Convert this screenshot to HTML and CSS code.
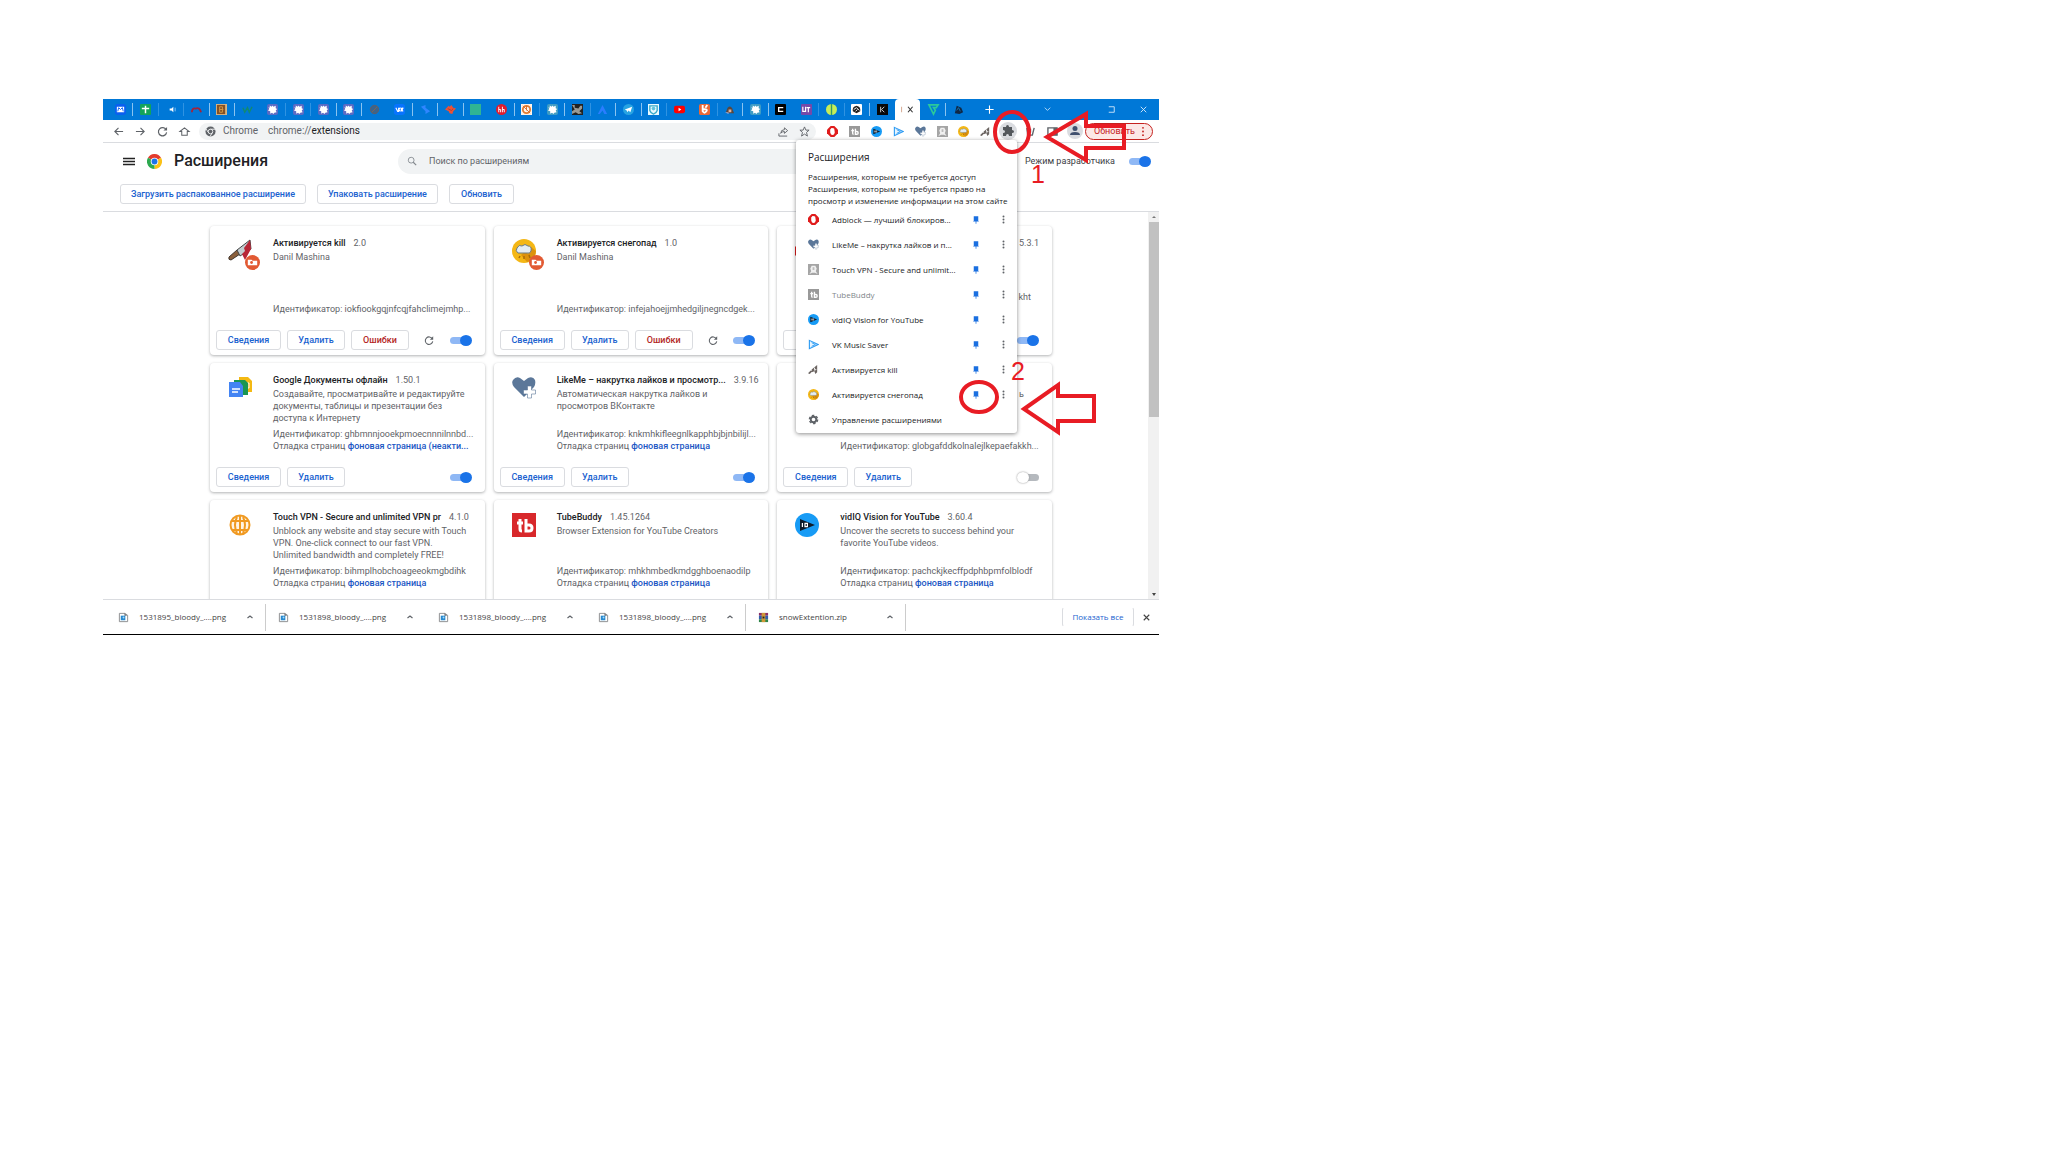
FILE: index.html
```html
<!DOCTYPE html>
<html lang="ru">
<head>
<meta charset="utf-8">
<title>Расширения</title>
<link rel="stylesheet" href="styles.css">
</head>
<body>
<svg class="defs" aria-hidden="true">
  <symbol id="paw" viewBox="0 0 12 12"><path d="M3 1.500l2 1.500 1-1.500L7 3l2.500-1v2.500l1.500 1-1.500 1.500 1 2-2.500.5L7 11 5.500 9.500l-2 1V8L1 7l1.500-1.500L1.500 3.500 3 4z" fill="#fff"/></symbol>
  <symbol id="block" viewBox="0 0 12 12"><path d="M4 0h4l4 4v4l-4 4H4L0 8V4z" fill="#e01b1b"/><path d="M3.500 4q0-1 .9-1V2.500q.7-.6 1.100 0 .7-.6 1.200 0 .9-.2 1.200.5L8.500 7Q8 9.800 6 9.800T3.500 7z" fill="#fff"/></symbol>
  <symbol id="tube" viewBox="0 0 12 12"><path d="M0 0h12v12H0z"/><path d="M4 3v5q0 1 1 1M2.500 5h3M7 3v6h1.500Q10 9 10 7.500T8.500 6H7" fill="none" stroke="#fff" stroke-width="1.500"/></symbol>
  <symbol id="vid" viewBox="0 0 12 12"><circle cx="6" cy="6" r="6" fill="#179bf5"/><path d="M2.500 3L10 6 2.500 9z" fill="#0d1b2a"/><path d="M3.700 5v2M5 5.200h1.200v1.600H5z" stroke="#fff" stroke-width=".6" fill="none"/></symbol>
  <symbol id="music" viewBox="0 0 12 12"><path d="M1.500 1.500L11 6l-9.500 4.500z" fill="#e8f5ff" stroke="#2b9af3" stroke-width="1.200"/><path d="M4 4l4 2-4 2" fill="none" stroke="#2b9af3"/></symbol>
  <symbol id="heart" viewBox="0 0 24 24"><path d="M12 21L2 11Q-1 7 1 4q3-4 7-2l4 3 4-3q5-2 7 2 1 4-1 7z" fill="#5b7799"/><path d="M15.500 10h4v4h4v4h-4v4h-4v-4h-4v-4h4z" fill="#fff" stroke="#5b7799" stroke-width=".6"/></symbol>
  <symbol id="person" viewBox="0 0 12 12"><path d="M0 0h12v12H0z" fill="#a5a5a5"/><path d="M1.500 11l2-3-1-3L4 2h4l1.500 3-1 3 2 3-3-1.500h-3z" fill="#f0f0f0"/><path d="M5 3.500h2v3H5z" fill="#bbb"/></symbol>
  <symbol id="snow" viewBox="0 0 24 24"><circle cx="12" cy="12" r="12" fill="#f4b716"/><path d="M9 16l10-8 5 4q-1 9-9 11z" fill="#dc920d"/><path d="M6 14q-3-2-1-5 2-4 5-2 3-3 6 0 4 0 3 5-1 3-4 2H7z" fill="#e4edf3" stroke="#6c7a80"/><path d="M8 17l-1 2m5-2v3m5-4l1 3" stroke="#a96d0a" stroke-width="1.500"/></symbol>
  <symbol id="knife" viewBox="0 0 24 24"><path d="M1 18l8-7 3 4-9 6q-3 0-2-3z" fill="#8b603c" stroke="#40362f"/><path d="M9 11L22 1l1 9-11 7z" fill="#c4cdd0" stroke="#444"/><path d="M22 1l1 9-6 11-3-6 3-3-1-3z" fill="#b82636"/></symbol>
  <symbol id="knifemini" viewBox="0 0 12 12"><path d="M0 10l3-3 1.500 1L2 11zM4 6l6-5v8l-2 2-1-3-3 1z" fill="#6c6562"/><path d="M7 4l.5 3L9 5.500" stroke="#fff" fill="none"/></symbol>
  <symbol id="badge" viewBox="0 0 16 16"><circle cx="8" cy="8" r="8" fill="#e25a33"/><path d="M3 5h4l1 1h5v5H3z" fill="#fff"/><circle cx="7" cy="8" r="1.500" fill="#e25a33"/></symbol>
  <symbol id="chrome" viewBox="0 0 24 24"><path d="M12 12L1.600 6A12 12 0 0 1 22.400 6z" fill="#e33b2e"/><path d="M12 12L22.400 6A12 12 0 0 1 12 24z" fill="#fbc116"/><path d="M12 12L12 24A12 12 0 0 1 1.600 6z" fill="#2da94f"/><circle cx="12" cy="12" r="6" fill="#fff"/><circle cx="12" cy="12" r="4.700" fill="#1a73e8"/></symbol>
  <symbol id="chromegray" viewBox="0 0 24 24"><circle cx="12" cy="12" r="11" fill="#5f6368"/><circle cx="12" cy="12" r="5" fill="#5f6368" stroke="#f1f3f4" stroke-width="2"/><path d="M12 7h11M7.700 14.500L2 6M16 14.500L11 23" stroke="#f1f3f4" stroke-width="2"/></symbol>
  <symbol id="pin" viewBox="0 0 8 12"><path d="M1 1h6v6l1 1H4.500v3h-1V8H0l1-1z" fill="#1a6fe0"/></symbol>
  <symbol id="dots" viewBox="0 0 4 12"><g fill="#5f6368"><circle cx="2" cy="2" r="1.300"/><circle cx="2" cy="6" r="1.300"/><circle cx="2" cy="10" r="1.300"/></g></symbol>
  <symbol id="reload" viewBox="0 0 12 12"><path d="M10 4A4.500 4.500 0 1 0 10.500 7" fill="none" stroke="#5f6368" stroke-width="1.300"/><path d="M11 1v4H7z" fill="#5f6368"/></symbol>
  <symbol id="caret" viewBox="0 0 8 6"><path d="M1.500 4L4 2l2.500 2" fill="none" stroke="#5f6368" stroke-width="1.200"/></symbol>
  <symbol id="image" viewBox="0 0 12 12"><path d="M1.500 1.500h6l3 2v7h-9z" fill="#fff" stroke="#87898b"/><path d="M3 4h5v5H3z" fill="#2789cf"/><path d="M7 1l3 3H7z" fill="#6c6f72"/><circle cx="6" cy="6" r="1" fill="#a5d9f7"/></symbol>
</svg>

<div class="window">
  <nav class="tabs">
    <div class="tablist">
      <a href="#"><svg viewBox="0 0 12 12"><rect width="12" height="12" rx="3" fill="#0a5ff0"/><path d="M2 3h8v6H2z" fill="#fff"/><path d="M3 8l1-4 2 2 2-2 1 4" fill="none" stroke="#0a5ff0"/></svg></a>
      <a href="#" class="sep"><svg viewBox="0 0 12 12"><rect width="12" height="12" rx="1" fill="#13a35a"/><path d="M6 2v8M2 5h8" stroke="#fff" stroke-width="1.600"/></svg></a>
      <a href="#" class="dim"><svg viewBox="0 0 12 12"><path d="M4 5h2l2-2v6L6 7H4z" fill="#fff"/><path d="M10 4v4" stroke="#8cc5f5"/></svg></a>
      <a href="#" class="dim"><svg viewBox="0 0 12 12"><path d="M1 9q0-5 4-4 4-2 6 4" fill="none" stroke="#a3243b" stroke-width="2"/></svg></a>
      <a href="#" class="sep"><svg viewBox="0 0 12 12"><path d="M0 0h12v12H0z" fill="#d9b583"/><path d="M1 1h9v10H1z" fill="#835126"/><path d="M4 3h3v6H4zM4 6h4" fill="none" stroke="#d99b45"/></svg></a>
      <a href="#" class="sep"><svg viewBox="0 0 12 12"><path d="M1 4l2 5 3-5 2 5 3-6" fill="none" stroke="#128a70" stroke-width="1.500"/></svg></a>
      <a href="#"><svg class="violet"><use href="#paw"/></svg></a>
      <a href="#" class="dim"><svg class="violet"><use href="#paw"/></svg></a>
      <a href="#" class="dim"><svg class="violet"><use href="#paw"/></svg></a>
      <a href="#" class="sep"><svg class="violet"><use href="#paw"/></svg></a>
      <a href="#" class="sep"><svg viewBox="0 0 12 12"><circle cx="6" cy="6" r="4.500" fill="#3c648b" stroke="#665d60"/><path d="M3 9l6-6" stroke="#7e6556"/></svg></a>
      <a href="#"><svg viewBox="0 0 12 12"><rect width="12" height="12" rx="3" fill="#0874ff"/><path d="M2 4l2 4h1V4v2l2-2-2 2 2 2m1-4v4l2-4-2 2 2 2" fill="none" stroke="#fff" stroke-width="1.200"/></svg></a>
      <a href="#" class="sep"><svg viewBox="0 0 12 12"><path d="M1 3l5-2v3l5 4-5 3V8z" fill="#2f86ff"/></svg></a>
      <a href="#" class="sep"><svg viewBox="0 0 12 12"><path d="M0 6l4-4 1 1 2-2 2 3 3 1-3 3-1 3-3-1-1-2z" fill="#ee5135"/><path d="M3 5l4 2 2-2" fill="none" stroke="#9d453b"/></svg></a>
      <a href="#" class="sep"><svg viewBox="0 0 12 12"><path d="M0 0h12v12H0z" fill="#30b493"/></svg></a>
      <a href="#"><svg viewBox="0 0 12 12"><circle cx="6" cy="6" r="6" fill="#e21b2c"/><path d="M3 3v6m0-3h2v3m2-6v6m0-3h2v3" fill="none" stroke="#fff"/></svg></a>
      <a href="#" class="sep"><svg viewBox="0 0 12 12"><path d="M0 0h12v12H0z" fill="#fff3e7"/><circle cx="6" cy="6" r="4" fill="none" stroke="#e17c32" stroke-width="2"/><path d="M2 2l8 8M6 2v5" stroke="#d76a28"/></svg></a>
      <a href="#" class="dim"><svg class="teal"><use href="#paw"/></svg></a>
      <a href="#" class="sep"><svg viewBox="0 0 12 12"><path d="M0 0h12v12H0z" fill="#222"/><path d="M0 1h3v3l4 1 2-3h2v3L8 8l3 2-4 1-3-2-4 2V8l3-2z" fill="#9a9a94"/></svg></a>
      <a href="#" class="dim"><svg viewBox="0 0 12 12"><path d="M6 1l5 10H8L6 7l-3 4H1z" fill="#2a7dff"/></svg></a>
      <a href="#" class="sep"><svg viewBox="0 0 12 12"><circle cx="6" cy="6" r="6" fill="#28a4e2"/><path d="M2 6l8-3-2 6-2-2-1 2-1-2z" fill="#fff"/></svg></a>
      <a href="#" class="sep"><svg viewBox="0 0 12 12"><path d="M0 0h12v12H0z" fill="#e9faff"/><path d="M2 2h8v5q-1 3-4 4-3-1-4-4z" fill="none" stroke="#38a9c9" stroke-width="1.500"/><circle cx="6" cy="5" r="2" fill="#5fc3dd"/></svg></a>
      <a href="#" class="dim"><svg viewBox="0 0 12 12"><rect y="2" width="12" height="8" rx="2" fill="#f00"/><path d="M5 4l3 2-3 2z" fill="#fff"/></svg></a>
      <a href="#"><svg viewBox="0 0 12 12"><rect width="12" height="12" rx="2" fill="#ec6837"/><path d="M4 1v7q2 3 4 0t-4-2M9 1L7 4" fill="none" stroke="#fff" stroke-width="2"/></svg></a>
      <a href="#" class="dim"><svg viewBox="0 0 12 12"><path d="M4 4q3-3 5 1l2 5H6L2 9z" fill="#59473e"/><path d="M5 6h3v3H5z" fill="#e3b49b"/><path d="M1 9h4v2" fill="#aac"/></svg></a>
      <a href="#" class="sep"><svg class="teal"><use href="#paw"/></svg></a>
      <a href="#" class="sep"><svg viewBox="0 0 12 12"><rect width="12" height="12" rx="1"/><path d="M9 4H4v4h5" fill="none" stroke="#fff" stroke-width="1.500"/></svg></a>
      <a href="#"><svg viewBox="0 0 12 12"><rect width="12" height="12" rx="1" fill="#7649a8"/><path d="M2 3v5h3V3m1 1h4M8 4v5" fill="none" stroke="#fff" stroke-width="1.300"/></svg></a>
      <a href="#" class="dim"><svg viewBox="0 0 12 12"><circle cx="6" cy="6" r="6" fill="#c6ed58"/><path d="M6 0v12" stroke="#349b64" stroke-width="1.500"/></svg></a>
      <a href="#" class="dim"><svg viewBox="0 0 12 12"><rect width="12" height="12" rx="1" fill="#fff"/><path d="M2 8q-1-5 4-6 5 1 4 6l-4 2z" fill="#222"/><path d="M3 6l3-2 3 3M5 8l2-2" stroke="#fff" fill="none"/></svg></a>
      <a href="#" class="sep"><svg viewBox="0 0 12 12"><path d="M0 0h12v12H0z" fill="#080808"/><path d="M4 3v6m4-6L5 6l3 3" fill="none" stroke="#ddd"/></svg></a>
      <a href="#" class="active"><svg viewBox="0 0 20 12"><path d="M3 3v6" stroke="#d1a28a"/><path d="M10 3l5 6m0-6l-5 6" stroke="#333" stroke-width="1.200"/></svg></a>
      <a href="#"><svg viewBox="0 0 12 12"><path d="M1 1h10L9 4H6l2 3-2 4z" fill="none" stroke="#2bc99a" stroke-width="1.800"/></svg></a>
      <a href="#" class="sep"><svg viewBox="0 0 12 12"><path d="M2 10l2-8 5 2 2 5-4 2z" fill="#102744"/><path d="M4 7l2-3 2 4" fill="none" stroke="#1176b5"/></svg></a>
    </div>
    <button class="newtab" aria-label="Новая вкладка"><svg viewBox="0 0 12 12"><path d="M6 1.500v9M1.500 6h9" stroke="#fff" stroke-width="1.200"/></svg></button>
    <div class="winctl">
      <button aria-label="Поиск вкладок"><svg viewBox="0 0 12 12"><path d="M3 4l3 3 3-3" fill="none" stroke="#b9dcf8"/></svg></button>
      <button aria-label="Развернуть"><svg viewBox="0 0 12 12"><path d="M3 3h6v6H3" fill="none" stroke="#cfe6fa"/></svg></button>
      <button aria-label="Закрыть"><svg viewBox="0 0 12 12"><path d="M3 3l6 6m0-6L3 9" stroke="#d6eafb"/></svg></button>
    </div>
  </nav>

  <div class="toolbar">
    <div class="navbtns">
      <button aria-label="Назад"><svg viewBox="0 0 12 12"><path d="M11 6H2m4-4L2 6l4 4" fill="none" stroke="#5f6368" stroke-width="1.200"/></svg></button>
      <button aria-label="Вперёд"><svg viewBox="0 0 12 12"><path d="M1 6h9M6 2l4 4-4 4" fill="none" stroke="#5f6368" stroke-width="1.200"/></svg></button>
      <button aria-label="Обновить страницу"><svg><use href="#reload"/></svg></button>
      <button aria-label="Домой"><svg viewBox="0 0 12 12"><path d="M1 6l5-4 5 4H9v4H3V6z" fill="none" stroke="#5f6368" stroke-width="1.100"/></svg></button>
    </div>
    <div class="omnibox">
      <svg><use href="#chromegray"/></svg>
      <span class="origin">Chrome</span><span class="url">chrome://<b>extensions</b></span>
      <svg viewBox="0 0 12 12"><path d="M1 8v3h9M3 8q0-4 4-4V2l3.500 3L7 8V6Q4 6 3 8z" fill="none" stroke="#5f6368"/></svg>
      <svg viewBox="0 0 12 12"><path d="M6 1l1.500 3.500H11L8.200 7l1 4L6 8.800 2.800 11l1-4L1 4.500h3.500z" fill="none" stroke="#5f6368"/></svg>
    </div>
    <div class="exts">
      <svg><use href="#block"/></svg>
      <svg class="gray"><use href="#tube"/></svg>
      <svg><use href="#vid"/></svg>
      <svg><use href="#music"/></svg>
      <svg><use href="#heart"/></svg>
      <svg><use href="#person"/></svg>
      <svg><use href="#snow"/></svg>
      <svg><use href="#knifemini"/></svg>
      <svg class="round" viewBox="0 0 18 18"><circle cx="9" cy="9" r="9" fill="#dadce0"/><path d="M4 5h3q0-2 1.500-2T10 5h3v3q2 0 2 1.500T13 11v3h-3q0-2-1.500-2T7 14H4v-3q2 0 2-1.500T4 8z" fill="#53575b"/></svg>
      <svg viewBox="0 0 12 12"><path d="M2 2l1 8h5l2-8M6 3v4" fill="none" stroke="#5f6368" stroke-width="1.500"/></svg>
      <svg viewBox="0 0 12 12"><path d="M1 2h10v8H1z" fill="none" stroke="#5f6368" stroke-width="1.500"/><path d="M7 2h4v8H7z" fill="#5f6368"/></svg>
      <svg class="round" viewBox="0 0 18 18"><circle cx="9" cy="9" r="8" fill="#dadce0"/><circle cx="9" cy="6.500" r="2.500" fill="#41516f"/><path d="M4 13q0-3 5-3t5 3z" fill="#41516f"/></svg>
    </div>
    <button class="update">Обновить <svg viewBox="0 0 4 12"><g fill="#c5221f"><circle cx="2" cy="2" r="1"/><circle cx="2" cy="6" r="1"/><circle cx="2" cy="10" r="1"/></g></svg></button>
  </div>

  <header class="header">
    <button class="menu" aria-label="Главное меню"><svg viewBox="0 0 12 9"><path d="M0 1.500h12M0 4.500h12M0 7.500h12" stroke="#222" stroke-width="1.400"/></svg></button>
    <svg class="logo"><use href="#chrome"/></svg>
    <h1>Расширения</h1>
    <label class="search"><svg viewBox="0 0 12 12"><circle cx="5" cy="5" r="3.500" fill="none" stroke="#80868b"/><path d="M7.500 7.500L11 11" stroke="#80868b" stroke-width="1.300"/></svg><input type="text" placeholder="Поиск по расширениям"></label>
    <label class="devmode">Режим разработчика <input class="toggle" type="checkbox" checked></label>
  </header>
  <div class="actions">
    <button class="load">Загрузить распакованное расширение</button>
    <button class="pack">Упаковать расширение</button>
    <button class="refresh">Обновить</button>
  </div>

  <main class="content">
    <div class="cards">
      <article class="card">
        <div class="pic"><svg><use href="#knife"/></svg><svg class="badge"><use href="#badge"/></svg></div>
        <div class="info"><h2><span>Активируется kill</span><small>2.0</small></h2><p class="desc">Danil Mashina</p><p class="id">Идентификатор: iokfiookgqjnfcqjfahclimejmhp...</p></div>
        <footer><button>Сведения</button><button>Удалить</button><button class="err">Ошибки</button><svg class="again"><use href="#reload"/></svg><input class="toggle" type="checkbox" checked aria-label="Включено"></footer>
      </article>
      <article class="card">
        <div class="pic"><svg><use href="#snow"/></svg><svg class="badge"><use href="#badge"/></svg></div>
        <div class="info"><h2><span>Активируется снегопад</span><small>1.0</small></h2><p class="desc">Danil Mashina</p><p class="id">Идентификатор: infejahoejjmhedgiljnegncdgek...</p></div>
        <footer><button>Сведения</button><button>Удалить</button><button class="err">Ошибки</button><svg class="again"><use href="#reload"/></svg><input class="toggle" type="checkbox" checked aria-label="Включено"></footer>
      </article>
      <article class="card">
        <div class="pic"><svg><use href="#block"/></svg></div>
        <div class="info tail"><h2><small>5.3.1</small></h2><p class="desc"></p><p class="id code">kht</p><p class="id">&nbsp;</p></div>
        <footer><button aria-label="Сведения"></button><input class="toggle" type="checkbox" checked aria-label="Включено"></footer>
      </article>
      <article class="card">
        <div class="pic"><svg viewBox="0 0 24 24"><path d="M11 1h9l4 4v11H11z" fill="#f4b913"/><path d="M17 7h4v5h-4z" fill="none" stroke="#fff"/><path d="M6 4h11l3 3v12H6z" fill="#199653"/><path d="M1 6h11l3 4v11H1z" fill="#4384f3"/><path d="M4 13h8M4 16h6" stroke="#fff" stroke-width="1.500"/></svg></div>
        <div class="info"><h2><span>Google Документы офлайн</span><small>1.50.1</small></h2><p class="desc">Создавайте, просматривайте и редактируйте документы, таблицы и презентации без доступа к Интернету</p><p class="id">Идентификатор: ghbmnnjooekpmoecnnnilnnbd...</p><p class="id">Отладка страниц <a href="#">фоновая страница (неакти...</a></p></div>
        <footer><button>Сведения</button><button>Удалить</button><input class="toggle" type="checkbox" checked aria-label="Включено"></footer>
      </article>
      <article class="card">
        <div class="pic"><svg><use href="#heart"/></svg></div>
        <div class="info"><h2><span>LikeMe – накрутка лайков и просмотр...</span><small>3.9.16</small></h2><p class="desc">Автоматическая накрутка лайков и просмотров ВКонтакте</p><p class="id">Идентификатор: knkmhkifleegnlkapphbjbjnbilijl...</p><p class="id">Отладка страниц <a href="#">фоновая страница</a></p></div>
        <footer><button>Сведения</button><button>Удалить</button><input class="toggle" type="checkbox" checked aria-label="Включено"></footer>
      </article>
      <article class="card">
        <div class="pic"></div>
        <div class="info"><h2></h2><p class="desc word">ь</p><p class="id">Идентификатор: globgafddkolnalejlkepaefakkh...</p></div>
        <footer><button>Сведения</button><button>Удалить</button><input class="toggle" type="checkbox" aria-label="Включено"></footer>
      </article>
      <article class="card">
        <div class="pic"><svg viewBox="0 0 24 24"><circle cx="12" cy="12" r="9.500" fill="#fff4e4" stroke="#f09a22" stroke-width="2"/><path d="M12 3v18M4 8h16M4 17h16M9 4q-4 8 0 16M15 4q4 8 0 16" fill="none" stroke="#f09a22" stroke-width="2"/></svg></div>
        <div class="info"><h2><span>Touch VPN - Secure and unlimited VPN pr</span><small>4.1.0</small></h2><p class="desc">Unblock any website and stay secure with Touch<br>VPN. One-click connect to our fast VPN.<br>Unlimited bandwidth and completely FREE!</p><p class="id">Идентификатор: bihmplhobchoageeokmgbdihk</p><p class="id">Отладка страниц <a href="#">фоновая страница</a></p></div>
        <footer></footer>
      </article>
      <article class="card">
        <div class="pic"><svg class="red"><use href="#tube"/></svg></div>
        <div class="info"><h2><span>TubeBuddy</span><small>1.45.1264</small></h2><p class="desc">Browser Extension for YouTube Creators</p><p class="id">Идентификатор: mhkhmbedkmdgghboenaodilp</p><p class="id">Отладка страниц <a href="#">фоновая страница</a></p></div>
        <footer></footer>
      </article>
      <article class="card">
        <div class="pic"><svg><use href="#vid"/></svg></div>
        <div class="info"><h2><span>vidIQ Vision for YouTube</span><small>3.60.4</small></h2><p class="desc">Uncover the secrets to success behind your favorite YouTube videos.</p><p class="id">Идентификатор: pachckjkecffpdphbpmfolblodf</p><p class="id">Отладка страниц <a href="#">фоновая страница</a></p></div>
        <footer></footer>
      </article>
    </div>
    <div class="scrollbar"><i class="up"></i><div class="thumb"></div><i class="down"></i></div>
  </main>

  <footer class="downloads">
    <div class="dl line"><svg><use href="#image"/></svg><span>1531895_bloody_....png</span><svg class="car"><use href="#caret"/></svg></div>
    <div class="dl"><svg><use href="#image"/></svg><span>1531898_bloody_....png</span><svg class="car"><use href="#caret"/></svg></div>
    <div class="dl"><svg><use href="#image"/></svg><span>1531898_bloody_....png</span><svg class="car"><use href="#caret"/></svg></div>
    <div class="dl line"><svg><use href="#image"/></svg><span>1531898_bloody_....png</span><svg class="car"><use href="#caret"/></svg></div>
    <div class="dl line"><svg viewBox="0 0 12 12"><path d="M1 1h10v3H1z" fill="#8b2f67"/><path d="M1 4h10v4H1z" fill="#315cad"/><path d="M1 8h10v3H1z" fill="#2e8547"/><path d="M4 1h4v10H4z" fill="#d19837"/><path d="M5 5h2v2H5z" fill="#222"/></svg><span>snowExtention.zip</span><svg class="car"><use href="#caret"/></svg></div>
    <button class="showall">Показать все</button>
    <button class="close" aria-label="Закрыть"><svg viewBox="0 0 12 12"><path d="M3 3l6 6m0-6L3 9" stroke="#444" stroke-width="1.200"/></svg></button>
  </footer>

  <section class="popup">
    <h3>Расширения</h3>
    <p>Расширения, которым не требуется доступ</p>
    <p>Расширения, которым не требуется право на<br>просмотр и изменение информации на этом сайте</p>
    <ul>
      <li><svg class="ico"><use href="#block"/></svg><span>Adblock — лучший блокиров...</span><svg class="pin"><use href="#pin"/></svg><svg class="dots"><use href="#dots"/></svg></li>
      <li><svg class="ico"><use href="#heart"/></svg><span>LikeMe – накрутка лайков и п...</span><svg class="pin"><use href="#pin"/></svg><svg class="dots"><use href="#dots"/></svg></li>
      <li><svg class="ico"><use href="#person"/></svg><span>Touch VPN - Secure and unlimit...</span><svg class="pin"><use href="#pin"/></svg><svg class="dots"><use href="#dots"/></svg></li>
      <li class="off"><svg class="ico gray"><use href="#tube"/></svg><span>TubeBuddy</span><svg class="pin"><use href="#pin"/></svg><svg class="dots"><use href="#dots"/></svg></li>
      <li><svg class="ico"><use href="#vid"/></svg><span>vidIQ Vision for YouTube</span><svg class="pin"><use href="#pin"/></svg><svg class="dots"><use href="#dots"/></svg></li>
      <li><svg class="ico"><use href="#music"/></svg><span>VK Music Saver</span><svg class="pin"><use href="#pin"/></svg><svg class="dots"><use href="#dots"/></svg></li>
      <li><svg class="ico"><use href="#knifemini"/></svg><span>Активируется kill</span><svg class="pin"><use href="#pin"/></svg><svg class="dots"><use href="#dots"/></svg></li>
      <li><svg class="ico"><use href="#snow"/></svg><span>Активируется снегопад</span><svg class="pin"><use href="#pin"/></svg><svg class="dots"><use href="#dots"/></svg></li>
      <li><svg class="ico" viewBox="0 0 12 12"><circle cx="6" cy="6" r="3" fill="none" stroke="#5f6368" stroke-width="2"/><circle cx="6" cy="6" r="4.500" fill="none" stroke="#5f6368" stroke-width="1.500" stroke-dasharray="2.700 2"/></svg><span>Управление расширениями</span></li>
    </ul>
  </section>

  <svg class="marks" viewBox="0 0 1056 536">
    <g fill="none" stroke="#e81c24" stroke-width="4">
      <ellipse cx="909" cy="33" rx="17" ry="20"/>
      <ellipse cx="876" cy="298" rx="18" ry="15"/>
      <path d="M944 38L983 15v12h38v22h-38v12z"/>
      <path d="M921 310l34-24v11h36v25h-36v11z"/>
    </g>
    <g class="num"><text x="928" y="84">1</text><text x="908" y="281">2</text></g>
  </svg>
</div>
</body>
</html>
```
FILE: styles.css
```css
* { box-sizing: border-box; }
body { margin: 0; background: #fff; font-family: Roboto, sans-serif; font-size: 9px; line-height: 12px; color: #5f6368; }
h1, h2, h3, p, ul { margin: 0; padding: 0; font-weight: 400; }
button { font: inherit; color: inherit; background: none; border: 0; padding: 0; }
a { color: #1a56c4; text-decoration: none; }
svg { display: block; flex: none; width: 11px; height: 11px; overflow: visible; }
.defs { position: absolute; width: 0; height: 0; }
.gray { fill: #999; }
.red { fill: #d8282b; }

.window { position: relative; width: 100%; max-width: 1056px; margin: 99px 0 0 103px; border-bottom: 1px solid #000; }

.tabs { display: flex; height: 21px; background: #0078d7; }
.tablist { display: flex; flex: 0 1 864px; margin-left: 4px; }
.tablist a { display: flex; flex: 1; align-items: center; justify-content: center; border-left: 1px solid transparent; border-image: linear-gradient(transparent 24%, var(--line, transparent) 24%, var(--line, transparent) 78%, transparent 78%) 1; }
.tablist a.sep { --line: #8ac3f0; }
.tablist a.dim { --line: #2f93e2; }
.tablist a.active { background: #fff; border-radius: 4px 4px 0 0; }
.tablist .active svg { width: 20px; }
.violet { background: #5b6bc4; border-radius: 2px; }
.teal { background: #3f9cc4; border-radius: 2px; }
.newtab { margin-left: 13px; }
.winctl { display: flex; flex: 1; justify-content: flex-end; gap: 21px; padding-right: 10px; }
.winctl button:first-child { margin-right: 32px; }

.toolbar { display: flex; align-items: center; height: 23px; border-bottom: 1px solid #dadce0; padding-right: 6px; }
.navbtns { display: flex; gap: 11px; padding: 0 9px 0 10px; }
.omnibox { display: flex; flex: 1; align-items: center; height: 17px; border-radius: 9px; background: #f1f3f4; padding: 0 6px; gap: 10px; font-size: 10px; }
.origin { margin-left: -3px; }
.url { flex: 1; }
.url b { font-weight: 400; color: #202124; }
.exts { display: flex; align-items: center; justify-content: space-between; width: 254px; margin: 0 4px 0 11px; }
.exts .round { width: 18px; height: 18px; margin: 0 -3px; }
.update { display: flex; align-items: center; justify-content: space-between; width: 68px; height: 17px; padding: 0 7px 0 8px; border: 1px solid #c5221f; border-radius: 9px; background: #fce8e6; color: #c5221f; font-size: 9px; }
.update svg { width: 4px; }

.header { display: flex; align-items: center; height: 36px; padding: 0 8px 0 20px; }
.menu svg { width: 12px; height: 9px; }
.logo { width: 15px; height: 15px; margin: 0 12px; }
h1 { width: 224px; font-size: 16px; line-height: 20px; font-weight: 500; color: #202124; }
.search { display: flex; align-items: center; gap: 12px; width: 466px; height: 25px; padding: 0 9px; border-radius: 13px; background: #f1f3f4; }
.search svg { width: 10px; height: 10px; }
.search input { flex: 1; padding: 0; border: 0; background: none; font: inherit; outline: 0; }
.search input::placeholder { color: #5f6368; }
.devmode { display: flex; align-items: center; gap: 14px; margin-left: auto; color: #3c4043; white-space: nowrap; }

.toggle { appearance: none; display: flex; align-items: center; flex: none; width: 22px; height: 11px; margin: 0; padding: 0; }
.toggle::before { content: ""; flex: none; width: 18px; height: 7px; margin-right: -8px; border-radius: 4px; background: #8fb8f5; }
.toggle::after { content: ""; flex: none; width: 12px; height: 11px; border-radius: 50%; background: #1a73e8; }
.toggle:not(:checked) { flex-direction: row-reverse; justify-content: flex-end; }
.toggle:not(:checked)::before { margin: 0 0 0 -8px; background: #b5b9be; }
.toggle:not(:checked)::after { position: relative; background: #fff; box-shadow: 0 0 2px #888; }

.actions { display: flex; height: 33px; padding: 5px 17px; gap: 11px; border-bottom: 1px solid #dadce0; }
.actions button, .card button, .showall { height: 20px; border: 1px solid #dadce0; border-radius: 3px; color: #1a62cf; font-weight: 500; white-space: nowrap; }
.load { width: 186px; }
.pack { width: 121px; }
.refresh { width: 65px; }

.content { display: flex; height: 387px; overflow: hidden; }
.cards { display: grid; flex: 1; grid-template-columns: repeat(3, 1fr); grid-auto-rows: 129px; gap: 8px 9px; padding: 14px 96px 0 107px; }
.card { display: grid; grid-template: 1fr 20px / 39px 1fr; gap: 0 6px; min-width: 0; padding: 10px 13px 5px 18px; border-radius: 4px; background: #fff; box-shadow: 0 1px 3px rgba(60, 64, 67, .4); }
.pic { position: relative; padding-top: 3px; }
.pic > svg { width: 24px; height: 24px; }
.pic .badge { position: absolute; left: 17px; top: 19px; width: 15px; height: 15px; }
.info { display: flex; flex-direction: column; min-width: 0; height: 79px; white-space: nowrap; }
.info h2 { display: flex; gap: 8px; height: 15px; font-size: 9px; line-height: 14px; font-weight: 500; color: #202124; }
.info small { font-size: 9px; font-weight: 400; color: #5f6368; }
.tail { align-items: flex-end; }
.tail .code { padding-right: 8px; }
.desc { flex: 1; white-space: normal; }
.desc.word { align-self: flex-end; padding-right: 15px; }
.info a { font-weight: 500; }
.card footer { display: flex; grid-column: 1 / -1; align-items: center; gap: 6px; margin-left: -12px; }
.card button { width: 58px; }
.card button:first-child { width: 65px; }
.card .err { color: #b3261e; }
.again { width: 10px; margin-left: 9px; }
.card .toggle { margin-left: auto; }

.scrollbar { display: flex; flex-direction: column; align-items: center; width: 11px; background: #f1f1f1; }
.scrollbar i { border: 2px solid transparent; margin: 4px 0; }
.scrollbar .up { border-bottom-color: #777; margin-top: 2px; }
.scrollbar .down { border-top: 3px solid #444; margin: auto 0 1px; }
.thumb { width: 10px; height: 195px; background: #c1c1c1; }

.downloads { display: flex; align-items: center; height: 35px; padding: 0 7px 0 3px; border-top: 1px solid #dadce0; color: #444; font-family: "Open Sans", sans-serif; font-size: 8px; }
.dl { display: flex; align-items: center; flex: 0 1 160px; height: 27px; padding: 0 11px 0 12px; border-right: 1px solid transparent; }
.dl.line { border-right-color: #ccc; }
.dl span { flex: 1; margin-left: 10px; white-space: nowrap; }
.dl .car { width: 8px; height: 6px; }
.showall { width: 72px; margin-left: auto; border-top-color: transparent; border-bottom-color: transparent; }
.close { margin-left: 7px; }

.popup { position: absolute; top: 41px; left: 693px; width: 221px; padding: 9px 10px 1px 12px; border-radius: 3px; background: #fff; box-shadow: 0 1px 4px rgba(0, 0, 0, .45); color: #202124; font-family: "Open Sans", sans-serif; font-size: 8px; }
.popup h3 { height: 22px; font-size: 10px; line-height: 16px; }
.popup p { white-space: nowrap; }
.popup ul { list-style: none; }
.popup li { display: flex; align-items: center; height: 25px; }
.popup li span { flex: 1; margin-left: 13px; white-space: nowrap; }
.popup .off { color: #80868b; }
.pin { width: 6px; height: 10px; margin-right: 23px; }
.dots { width: 3px; height: 9px; margin-right: 2px; }

.marks { position: absolute; inset: 0; width: 1056px; height: 536px; pointer-events: none; }
.num { fill: #e81c24; font: 25px "Liberation Sans", sans-serif; }
```
